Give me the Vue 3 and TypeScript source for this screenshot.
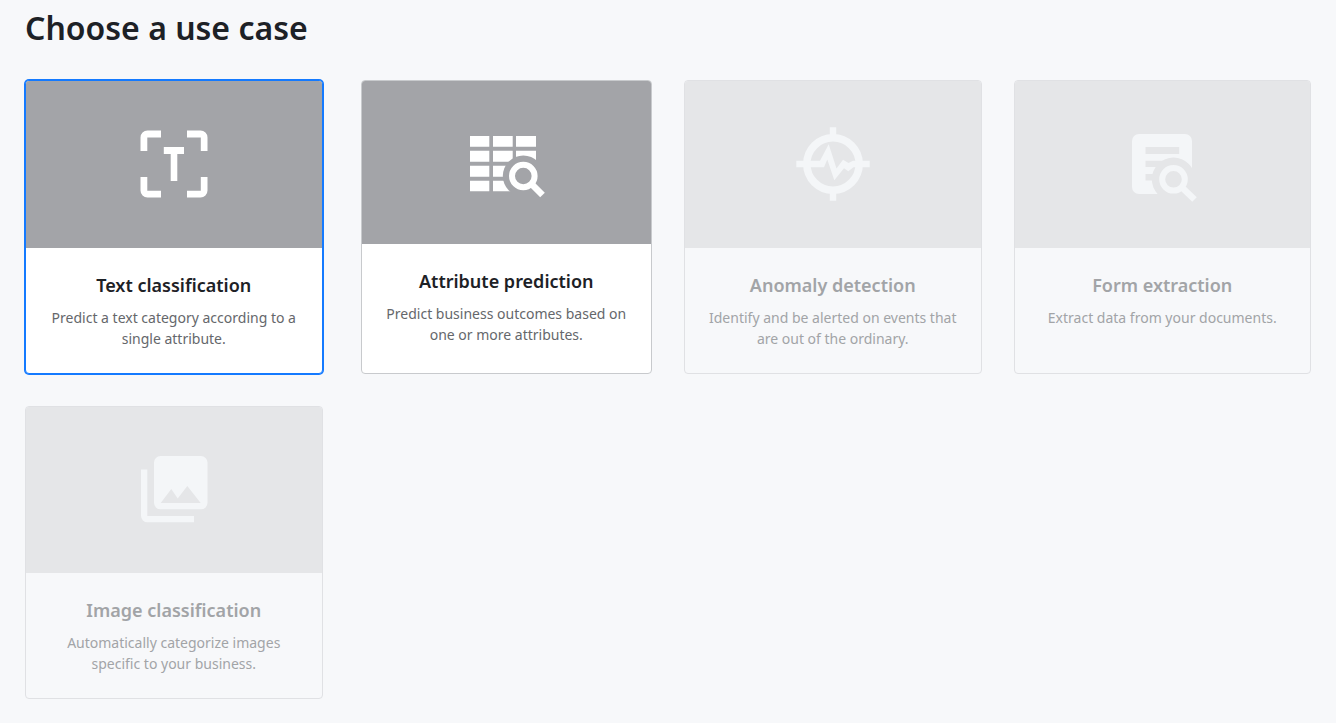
<script setup lang="ts">
import { ref } from 'vue'

type UseCaseId = 'text' | 'attribute' | 'anomaly' | 'form' | 'image'

interface UseCase {
  id: UseCaseId
  title: string
  description: string
  disabled: boolean
}

const useCases: UseCase[] = [
  { id: 'text', title: 'Text classification', description: 'Predict a text category according to a single attribute.', disabled: false },
  { id: 'attribute', title: 'Attribute prediction', description: 'Predict business outcomes based on one or more attributes.', disabled: false },
  { id: 'anomaly', title: 'Anomaly detection', description: 'Identify and be alerted on events that are out of the ordinary.', disabled: true },
  { id: 'form', title: 'Form extraction', description: 'Extract data from your documents.', disabled: true },
  { id: 'image', title: 'Image classification', description: 'Automatically categorize images specific to your business.', disabled: true },
]

const selected = ref<UseCaseId>('text')
</script>

<template>
  <main class="page">
    <h1 class="heading">Choose a use case</h1>
    <div class="grid">
      <button
        v-for="item in useCases"
        :key="item.id"
        type="button"
        class="card"
        :class="[`card-${item.id}`, { selected: selected === item.id }]"
        :disabled="item.disabled"
        :aria-pressed="selected === item.id"
        @click="selected = item.id"
      >
        <span class="cover">
          <svg class="icon" viewBox="0 1 80 80" fill="currentColor" aria-hidden="true">
            <g v-if="item.id === 'text'">
              <path d="M6.500 27V13.500A7 7 0 0 1 13.500 6.500H27V13.500H13.300V27ZM53 6.500H66.500A7 7 0 0 1 73.500 13.500V27H66.800V13.500H53ZM73.500 53V66.500A7 7 0 0 1 66.500 73.500H53V66.700H66.800V53ZM27 73.500H13.500A7 7 0 0 1 6.500 66.500V53H13.300V66.700H27Z" />
              <path d="M29.800 23H50V30H43.300V57H36.700V30H29.800Z" />
            </g>
            <g v-else-if="item.id === 'attribute'">
              <mask id="table-cut">
                <rect width="80" height="80" fill="#fff" />
                <circle cx="57.300" cy="54" r="20.500" fill="#000" />
              </mask>
              <path mask="url(#table-cut)" d="M4 14H23.300V24.700H4ZM27 14H46.700V24.700H27ZM50 14H70V24.700H50ZM4 28.700H23.300V39.700H4ZM27 28.700H46.700V39.700H27ZM50 28.700H70V39.700H50ZM4 43.700H23.300V54.700H4ZM27 43.700H46.700V54.700H27ZM4 58.700H23.300V69.300H4ZM27 58.700H46.700V69.300H27Z" />
              <circle cx="57.300" cy="54" r="11.300" fill="none" stroke="currentColor" stroke-width="6" />
              <path d="M65.500 62L76.500 73" stroke="currentColor" stroke-width="6.500" />
            </g>
            <g v-else-if="item.id === 'anomaly'">
              <circle cx="40" cy="40" r="26.200" fill="none" stroke="currentColor" stroke-width="7.500" />
              <path d="M36.800 3.300H43.200V13H36.800ZM36.800 67H43.200V76.700H36.800ZM3.300 36.800H13V43.200H3.300ZM67 36.800H76.700V43.200H67Z" />
              <path d="M16 36.800H27L35.700 20.300L43.500 44.500L50 35.800L55.500 39L60 36.800H64V43.200H60.500L55.300 47.300L51 44.300L41.300 56.300L34.300 35.500L31 43.200H16Z" />
            </g>
            <g v-else-if="item.id === 'form'">
              <mask id="form-cut">
                <rect width="80" height="80" fill="#fff" />
                <path d="M23.500 23H57.200V30H23.500ZM23.500 36.700H50V43H23.500ZM23.500 50H40V56.400H23.500Z" fill="#000" />
                <circle cx="51.500" cy="55.300" r="21.700" fill="#000" />
              </mask>
              <rect mask="url(#form-cut)" x="10" y="10" width="60" height="60" rx="7" />
              <circle cx="51.500" cy="55.300" r="11.300" fill="none" stroke="currentColor" stroke-width="6" />
              <path d="M60 63.500L72.500 75.500" stroke="currentColor" stroke-width="6.500" />
            </g>
            <g v-else>
              <path d="M7 20.500H13.300V67H60V73.300H13.500A6.500 6.500 0 0 1 7 66.800Z" />
              <path fill-rule="evenodd" d="M26.500 7H67A6.500 6.500 0 0 1 73.500 13.500V53.800A6.500 6.500 0 0 1 67 60.300H26.500A6.500 6.500 0 0 1 20 53.800V13.500A6.500 6.500 0 0 1 26.500 7ZM26.700 54H66.700L53.300 37L43.700 49.500L37.300 40Z" />
            </g>
          </svg>
        </span>
        <span class="body">
          <span class="title">{{ item.title }}</span>
          <span class="description">{{ item.description }}</span>
        </span>
      </button>
    </div>
  </main>
</template>

<style>
body {
  background: #f7f8fa;
}
</style>

<style scoped>
.page {
  padding: 9px 25px 24px;
  color: #1d2126;
  font-family: "Noto Sans", sans-serif;
}

.heading {
  margin: 0 0 33px;
  font-size: 32px;
  font-weight: 600;
  line-height: 1.2;
}

.grid {
  display: grid;
  grid-template-columns: repeat(4, minmax(0, 1fr));
  gap: 32px;
}

.card {
  display: flex;
  flex-direction: column;
  min-width: 0;
  padding: 0;
  overflow: hidden;
  border: 1px solid #c8cacd;
  border-radius: 4px;
  background: #fff;
  color: inherit;
  font: inherit;
  text-align: center;
  cursor: pointer;
}

.card-attribute {
  margin-left: 6px;
}

.card.selected {
  border-color: #147aff;
  box-shadow: 0 0 0 1px #147aff;
}

.card:disabled {
  border-color: #e0e1e4;
  background: transparent;
  color: #a2a4a7;
  cursor: default;
}

.cover {
  display: flex;
  align-items: center;
  justify-content: center;
  width: 100%;
  aspect-ratio: 16 / 9;
  background: #a3a4a8;
  color: #fff;
}

.card:disabled .cover {
  background: #e5e6e8;
  color: #f4f6f8;
}

.icon {
  width: 80px;
  height: 80px;
}

.body {
  display: flex;
  flex-direction: column;
  gap: 8px;
  box-sizing: border-box;
  width: 100%;
  padding: 24px;
}

.title {
  font-size: 18px;
  font-weight: 600;
  line-height: 27px;
}

.description {
  color: #65676b;
  font-size: 14px;
  line-height: 21px;
}

.card:disabled .description {
  color: inherit;
}
</style>
